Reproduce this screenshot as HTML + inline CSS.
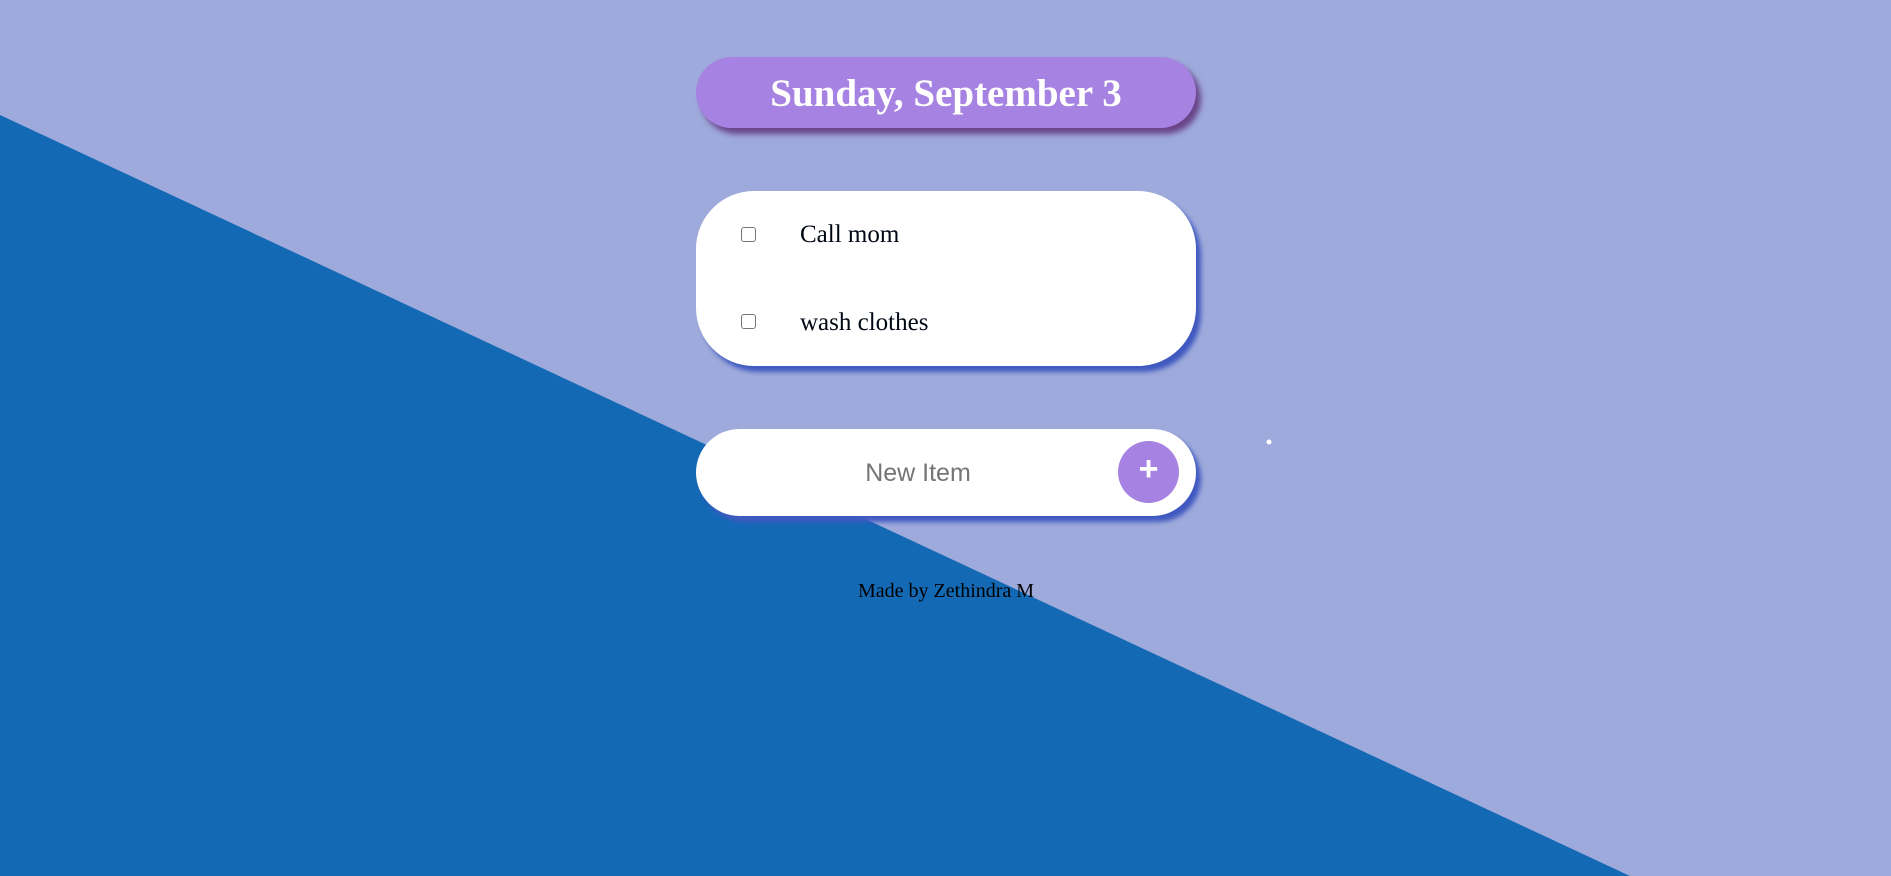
<!DOCTYPE html>
<html><head><style>
html,body{margin:0;padding:0;width:1891px;height:876px;overflow:hidden;background:#9eaadb;font-family:"Liberation Serif",serif;}
svg.bg{position:absolute;left:0;top:0}
.hdr{position:absolute;left:696px;top:57px;width:500px;height:71px;border-radius:36px;background:#a683e2;box-shadow:5px 6px 6px #6a4488;color:#fff;font-weight:bold;font-size:39px;text-align:center;line-height:73px;}
.card{position:absolute;left:696px;top:191px;width:500px;height:175px;border-radius:58px;background:#fff;box-shadow:5px 6px 5px #4059c0;}
.cb{position:absolute;left:741px;width:13px;height:13px;border:1px solid #767676;border-radius:3px;background:#fff}
.it{position:absolute;left:800px;font-size:25px;color:#000814;}
.inp{position:absolute;left:696px;top:429px;width:500px;height:87px;border-radius:44px;background:#fff;box-shadow:5px 6px 5px #4059c0;}
.ph{position:absolute;left:818px;width:200px;text-align:center;top:459px;font-family:"Liberation Sans",sans-serif;font-size:25px;color:#757575;}
.btn{position:absolute;left:1118px;top:441px;width:61px;height:62px;border-radius:50%;background:#a683e2;color:#fff;font-family:"Liberation Sans",sans-serif;font-weight:bold;font-size:34px;text-align:center;line-height:56px;}
.ft{position:absolute;left:858px;top:580px;font-size:20px;color:#000;}
</style></head><body>
<svg class="bg" width="1891" height="876"><polygon points="0,115 1630,876 0,876" fill="#1469b5"/><circle cx="1269" cy="442" r="2.5" fill="#fff"/></svg>
<div class="hdr">Sunday, September 3</div>
<div class="card"></div>
<div class="cb" style="top:227px"></div>
<div class="it" style="top:221px">Call mom</div>
<div class="cb" style="top:314px"></div>
<div class="it" style="top:309px">wash clothes</div>
<div class="inp"></div>
<div class="ph">New Item</div>
<div class="btn">+</div>
<div class="ft">Made by Zethindra M</div>
</body></html>
